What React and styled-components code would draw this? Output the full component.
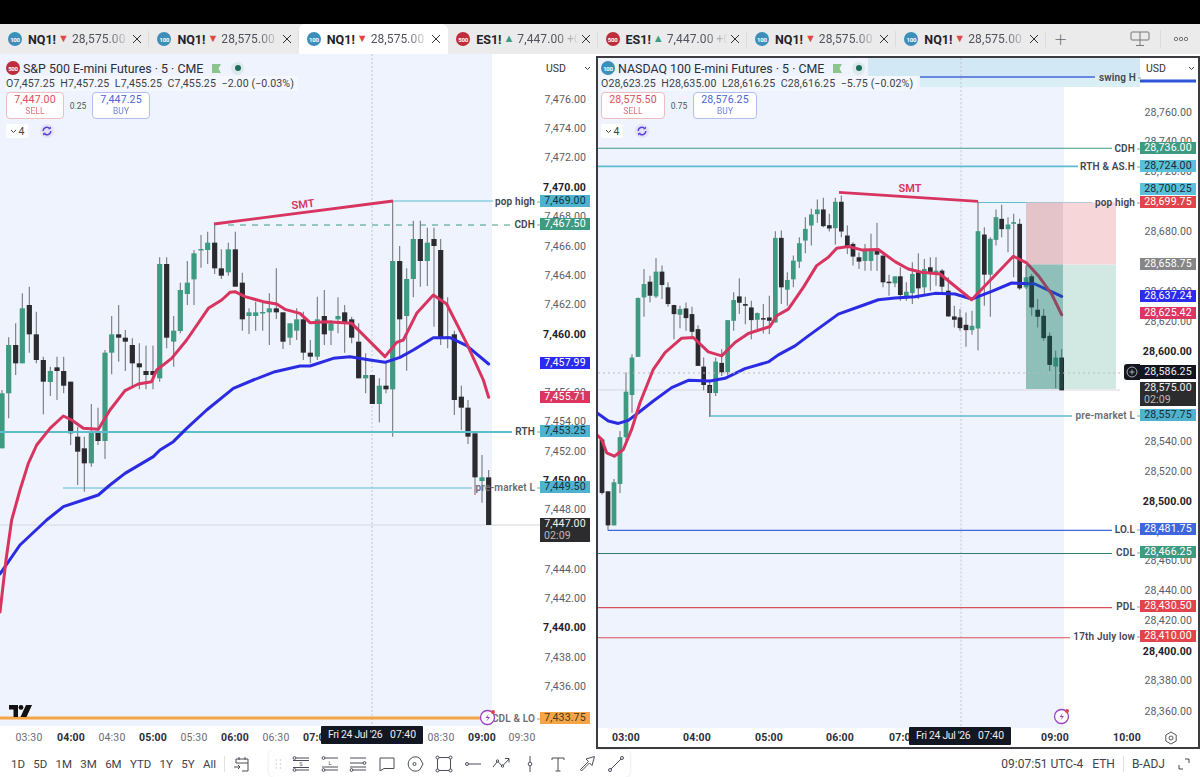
import React from "react";
import styled, { createGlobalStyle } from "styled-components";

const GlobalStyle = createGlobalStyle`
  html, body { margin: 0; padding: 0; background: #fff; }
  body { font-family: Roboto, "Liberation Sans", sans-serif; color: #2a2e39; }
`;

const GREEN = "#3f9a82";
const BLACK = "#2b2b2f";
const PINK = "#d7355f";
const BLUE = "#2b2be3";
const CYAN = "#5cbdd0";

const g = "g";
const k = "k";

// rows: center x, wick top, body top, body bottom, wick bottom, colour (zoomed coords)
const toPage = (ox, oy, rows) =>
  rows.map(([x, wt, bt, bb, wb, c]) => ({
    x: ox + x / 3,
    wt: oy + wt / 3,
    bt: oy + bt / 3,
    bb: oy + bb / 3,
    wb: oy + wb / 3,
    c,
  }));

const toPoints = (ox, oy, pts) =>
  pts.map(([x, y]) => `${ox + x / 3},${oy + y / 3}`).join(" ");

const leftCandles = [
  ...toPage(0, 180, [
    [6, 630, 640, 805, 805, g], [26, 472, 495, 640, 715, g], [47, 430, 495, 550, 585, k],
    [67, 340, 385, 550, 550, g], [88, 320, 375, 463, 518, k], [109, 395, 463, 540, 550, k],
    [130, 530, 540, 605, 703, k], [151, 560, 573, 606, 648, g], [171, 530, 562, 573, 660, k],
    [191, 530, 573, 617, 640, k], [212, 605, 605, 760, 795, k], [233, 740, 770, 815, 915, k],
    [253, 770, 805, 850, 935, k], [274, 672, 755, 850, 860, g], [294, 683, 755, 783, 795, k],
    [315, 510, 518, 783, 837, g], [335, 408, 463, 518, 583, g], [356, 375, 463, 473, 545, k],
    [376, 450, 473, 485, 573, k], [397, 475, 495, 550, 620, k], [418, 490, 550, 562, 628, k],
    [438, 497, 573, 585, 628, k], [459, 497, 573, 585, 628, k], [479, 232, 252, 595, 605, g],
    [500, 232, 252, 473, 505, k], [521, 408, 452, 485, 560, g], [541, 308, 330, 453, 460, g],
    [562, 243, 308, 342, 375, g], [582, 210, 220, 298, 375, g], [603, 165, 207, 208, 263, g],
    [623, 155, 188, 210, 252, g], [644, 133, 188, 265, 282, k], [664, 208, 265, 287, 297, k],
    [685, 188, 208, 277, 287, g], [706, 155, 208, 320, 320, k], [727, 278, 308, 418, 452, k],
    [747, 385, 397, 408, 462, g], [767, 365, 397, 408, 452, g], [788, 365, 396, 398, 452, g],
    [808, 340, 385, 397, 495, g], [829, 265, 385, 397, 417, k], [849, 397, 397, 485, 507, k],
    [870, 430, 430, 473, 495, g], [890, 385, 418, 452, 480, g],
  ]),
  ...toPage(300, 180, [
    [10, 395, 418, 518, 540, k], [31, 480, 518, 530, 550, k], [52, 350, 418, 530, 540, g],
    [73, 330, 408, 463, 495, k], [93, 420, 430, 452, 495, g], [114, 352, 408, 418, 460, g],
    [134, 375, 397, 430, 518, k], [155, 410, 418, 473, 490, k], [176, 430, 485, 595, 595, k],
    [197, 520, 585, 595, 640, g], [217, 590, 585, 672, 672, k], [238, 595, 617, 672, 727, g],
    [258, 545, 617, 628, 640, k], [278, 65, 243, 628, 770, g], [299, 198, 243, 418, 530, k],
    [320, 265, 297, 408, 572, g], [340, 122, 177, 297, 352, g], [361, 122, 177, 243, 320, k],
    [382, 143, 188, 243, 318, g], [402, 143, 177, 198, 440, k], [422, 177, 210, 473, 495, k],
    [443, 352, 470, 475, 505, k], [463, 452, 463, 660, 705, k], [484, 617, 650, 683, 750, k],
    [504, 660, 683, 770, 792, k], [525, 760, 760, 892, 945, k], [546, 825, 892, 903, 968, g],
    [566, 870, 892, 1035, 1035, k],
  ]),
];

const rightCandles = [
  ...toPage(595, 180, [
    [21, 770, 775, 935, 940, k], [39, 930, 930, 1032, 1048, k], [57, 893, 903, 1032, 1032, g],
    [75, 750, 768, 908, 935, g], [93, 575, 632, 768, 790, g], [111, 520, 530, 642, 695, g],
    [129, 350, 352, 528, 528, g], [147, 265, 310, 350, 408, g], [165, 285, 303, 345, 365, k],
    [183, 232, 273, 347, 352, g], [201, 255, 273, 313, 355, k], [219, 305, 320, 370, 378, k],
    [237, 372, 373, 400, 475, k], [255, 375, 385, 402, 442, g], [273, 365, 383, 412, 450, k],
    [291, 378, 400, 453, 470, k], [309, 433, 445, 555, 555, k], [326, 530, 557, 612, 628, k],
    [344, 600, 612, 636, 708, k], [362, 530, 542, 636, 645, g], [380, 505, 546, 574, 585, k],
    [398, 418, 418, 574, 583, g], [416, 335, 358, 420, 450, g], [433, 293, 347, 366, 400, k],
    [451, 348, 370, 375, 430, k], [469, 360, 380, 418, 475, k], [487, 395, 397, 417, 450, g],
    [505, 370, 412, 416, 458, k], [523, 345, 410, 420, 460, k], [541, 152, 172, 425, 425, g],
    [559, 150, 172, 320, 370, k], [577, 275, 298, 327, 375, g], [595, 225, 240, 296, 320, g],
    [613, 170, 188, 243, 262, g], [631, 110, 145, 180, 218, g], [649, 85, 102, 135, 195, g],
    [667, 57, 87, 101, 127, g], [685, 52, 87, 137, 140, k], [703, 100, 134, 144, 153, k],
    [721, 52, 64, 143, 192, g], [739, 45, 64, 153, 170, k], [757, 135, 165, 197, 220, k],
    [774, 185, 190, 228, 255, k], [792, 215, 230, 243, 265, k], [810, 190, 207, 241, 270, g],
    [828, 160, 207, 241, 270, g], [846, 127, 207, 222, 270, k], [864, 225, 225, 305, 320, k],
    [882, 282, 303, 306, 345, k],
  ]),
  ...toPage(895, 130, [
    [0, 437, 437, 458, 470, g], [16, 410, 437, 493, 510, k], [34, 455, 483, 497, 510, g],
    [52, 395, 430, 487, 520, g], [70, 368, 425, 473, 505, k], [88, 385, 415, 470, 492, g],
    [106, 380, 410, 427, 480, k], [123, 380, 420, 427, 465, g], [141, 415, 420, 468, 490, k],
    [160, 440, 480, 557, 557, k], [178, 525, 557, 567, 590, k], [195, 535, 560, 592, 600, k],
    [213, 545, 582, 598, 648, k], [231, 540, 585, 598, 612, g], [249, 213, 302, 593, 658, g],
    [268, 290, 312, 432, 525, k], [286, 320, 325, 432, 558, g], [303, 237, 260, 328, 345, g],
    [320, 223, 265, 296, 320, k], [339, 260, 282, 296, 365, g], [356, 250, 275, 280, 440, g],
    [374, 265, 280, 473, 478, k], [393, 405, 440, 470, 475, g], [410, 430, 437, 530, 555, k],
    [428, 505, 537, 558, 590, k], [446, 535, 555, 622, 630, k], [464, 605, 615, 702, 720, k],
    [482, 660, 680, 707, 772, g], [500, 655, 680, 778, 778, k],
  ]),
];

const leftRed = [
  "0,612 6,560 " +
    toPoints(0, 180, [[35, 1020], [60, 930], [85, 850], [110, 795], [150, 745], [190, 708], [215, 720], [250, 745], [295, 748], [330, 690], [375, 632], [415, 612], [455, 605], [470, 570], [515, 535], [560, 480], [625, 385], [665, 360], [690, 337], [705, 335], [735, 350], [790, 365], [830, 372], [855, 388], [900, 400]]),
  toPoints(300, 180, [[30, 428], [80, 425], [130, 428], [155, 430], [180, 455], [255, 530], [290, 487], [310, 480], [350, 400], [400, 345], [440, 372], [500, 490], [550, 600], [566, 652]]),
].join(" ");

const leftBlue = [
  "0,574 20,545 " +
    toPoints(0, 180, [[140, 1020], [190, 980], [250, 960], [295, 945], [330, 915], [375, 880], [460, 830], [480, 810], [520, 785], [560, 745], [620, 690], [700, 625], [760, 600], [825, 575], [900, 558]]),
  toPoints(300, 180, [[30, 558], [100, 535], [150, 530], [210, 540], [255, 547], [300, 532], [340, 510], [400, 473], [450, 473], [500, 497], [566, 552]]),
].join(" ");

const rightRed = [
  toPoints(595, 180, [[5, 760], [20, 775], [35, 815], [58, 825], [85, 805], [110, 745], [135, 665], [175, 565], [210, 515], [260, 472], [295, 470], [340, 513], [380, 525], [420, 485], [460, 458], [525, 437], [545, 405], [580, 385], [625, 320], [665, 255], [700, 230], [725, 203], [760, 198], [800, 208], [850, 207], [900, 243]]),
  toPoints(895, 130, [[40, 415], [80, 425], [135, 430], [230, 507], [270, 465], [355, 377], [395, 397], [430, 435], [470, 490], [500, 552]]),
].join(" ");

const rightBlue = [
  toPoints(595, 180, [[5, 695], [40, 720], [70, 727], [100, 718], [130, 695], [175, 660], [230, 620], [280, 598], [345, 600], [390, 592], [450, 563], [520, 543], [550, 522], [600, 495], [640, 465], [730, 400], [800, 375], [850, 357], [900, 352]]),
  toPoints(895, 130, [[60, 498], [120, 488], [180, 490], [230, 505], [290, 482], [350, 457], [420, 460], [500, 497]]),
].join(" ");

const leftPrices = [
  [7476, 99], [7474, 128], [7472, 157], [7470, 187, true], [7468, 216], [7466, 246], [7464, 275],
  [7462, 304], [7460, 334, true], [7456, 392], [7454, 421], [7452, 451], [7450, 480, true], [7448, 509],
  [7444, 569], [7442, 598], [7440, 627, true], [7438, 657], [7436, 686],
].map(([p, y, bold]) => ({ text: `${p.toString().replace(/^(\d)/, "$1,")}.00`, y, bold }));

const rightPrices = [
  ["28,760.00", 112], ["28,740.00", 141], ["28,720.00", 171], ["28,680.00", 231], ["28,640.00", 291],
  ["28,620.00", 321], ["28,600.00", 351, true], ["28,540.00", 441], ["28,520.00", 471],
  ["28,500.00", 501, true], ["28,480.00", 531], ["28,460.00", 560], ["28,440.00", 590], ["28,420.00", 620],
  ["28,400.00", 651, true], ["28,380.00", 680], ["28,360.00", 711],
].map(([text, y, bold]) => ({ text, y, bold }));

const leftTags = [
  { y: 201, text: "7,469.00", bg: "#4fb3cf", fg: "#16323c", label: "pop high" },
  { y: 224, text: "7,467.50", bg: "#3f9a82", label: "CDH" },
  { y: 363, text: "7,457.99", bg: "#2b2bef" },
  { y: 397, text: "7,455.71", bg: "#dc3561" },
  { y: 431, text: "7,453.25", bg: "#4fb3cf", fg: "#16323c", label: "RTH" },
  { y: 487, text: "7,449.50", bg: "#4fb3cf", fg: "#16323c", label: "pre-market L", soft: true },
  { y: 718, text: "7,433.75", bg: "#f5a545", fg: "#4a3a20", label: "CDL & LO", soft: true },
];

const rightTags = [
  { y: 148, text: "28,736.00", bg: "#3f9a82", label: "CDH" },
  { y: 166, text: "28,724.00", bg: "#5cc0da", fg: "#1c2a33", label: "RTH & AS.H" },
  { y: 189, text: "28,700.25", bg: "#5cc0da", fg: "#1c2a33" },
  { y: 202, text: "28,699.75", bg: "#e2444b", label: "pop high" },
  { y: 264, text: "28,658.75", bg: "#868686" },
  { y: 296, text: "28,637.24", bg: "#2b2bef" },
  { y: 313, text: "28,625.42", bg: "#dc3561" },
  { y: 415, text: "28,557.75", bg: "#4fb3cf", fg: "#1c2a33", label: "pre-market L", soft: true },
  { y: 529, text: "28,481.75", bg: "#3f66dd", label: "LO.L" },
  { y: 552, text: "28,466.25", bg: "#3f9a82", label: "CDL" },
  { y: 606, text: "28,430.50", bg: "#e2444b", label: "PDL" },
  { y: 636, text: "28,410.00", bg: "#e2444b", label: "17th July low" },
];

const tabs = [
  { kind: "100", sym: "NQ1!", price: "28,575.00", down: true },
  { kind: "100", sym: "NQ1!", price: "28,575.00", down: true },
  { kind: "100", sym: "NQ1!", price: "28,575.00", down: true, active: true },
  { kind: "500", sym: "ES1!", price: "7,447.00 +0", down: false },
  { kind: "500", sym: "ES1!", price: "7,447.00 +0", down: false },
  { kind: "100", sym: "NQ1!", price: "28,575.00", down: true },
  { kind: "100", sym: "NQ1!", price: "28,575.00", down: true },
];

const Page = styled.div`
  width: 1200px;
  height: 777px;
  overflow: hidden;
  display: flex;
  flex-direction: column;
  background: #fff;
`;

const TopStrip = styled.div`
  height: 24px;
  background: #000;
`;

const TabBar = styled.div`
  height: 30px;
  display: flex;
  align-items: stretch;
  background: #ebebeb;
`;

const Tab = styled.div`
  width: 149.4px;
  box-sizing: border-box;
  display: flex;
  align-items: center;
  padding: 0 6px 0 8px;
  background: ${(p) => (p.$active ? "#fff" : "transparent")};
  border-radius: 6px 6px 0 0;
  font-size: 12px;
  position: relative;
  &::after {
    content: "";
    position: absolute;
    right: 0;
    top: 7px;
    bottom: 7px;
    width: 1px;
    background: ${(p) => (p.$active ? "transparent" : "#dcdcdc")};
  }
`;

const Badge = styled.span`
  flex: none;
  width: 14px;
  height: 14px;
  border-radius: 50%;
  background: ${(p) => (p.$kind === "500" ? "#bf2d3a" : "#3c8fb9")};
  color: #fff;
  font-size: 6px;
  font-weight: 700;
  display: flex;
  align-items: center;
  justify-content: center;
  letter-spacing: -0.2px;
`;

const TabSymbol = styled.span`
  font-weight: 700;
  font-size: 12.5px;
  color: #1e222d;
  margin-left: 6px;
`;

const Arrow = styled.span`
  font-size: 11px;
  line-height: 12px;
  color: ${(p) => (p.$down ? "#e04848" : "#3f9a82")};
  margin: 0 3px 0 2px;
`;

const TabPrice = styled.span`
  flex: 1;
  min-width: 0;
  overflow: hidden;
  white-space: nowrap;
  color: #50535e;
  letter-spacing: 0.1px;
  -webkit-mask-image: linear-gradient(to right, #000 62%, transparent 100%);
  mask-image: linear-gradient(to right, #000 62%, transparent 100%);
`;

const CloseIcon = styled.svg`
  flex: none;
  width: 10px;
  height: 10px;
  margin: 0 1px 0 2px;
`;

const AddTab = styled.div`
  width: 30px;
  font-size: 21px;
  font-weight: 200;
  color: #666;
  display: flex;
  align-items: center;
  justify-content: center;
`;

const TabActions = styled.div`
  flex: 1;
  display: flex;
  align-items: center;
  justify-content: flex-end;
  gap: 10px;
  padding-right: 11px;
  color: #777;
`;

const ActionDivider = styled.span`
  width: 1px;
  height: 18px;
  background: #dcdcdc;
`;

const Panes = styled.div`
  height: 696px;
  display: flex;
  gap: 2px;
`;

const PaneBox = styled.div`
  position: relative;
  box-sizing: border-box;
  display: flex;
  flex-direction: column;
  width: ${(p) => (p.$framed ? "604px" : "594px")};
  height: ${(p) => (p.$framed ? "693px" : "696px")};
  margin-top: ${(p) => (p.$framed ? "2px" : "0")};
  border: ${(p) => (p.$framed ? "2px solid #3c3c40" : "none")};
`;

const PlotRow = styled.div`
  flex: 1;
  min-height: 0;
  display: flex;
  position: relative;
`;

const Plot = styled.div`
  flex: 1;
  min-width: 0;
  position: relative;
  overflow: hidden;
`;

const ChartSvg = styled.svg`
  position: absolute;
  left: 0;
  top: 0;
  width: 100%;
  height: 100%;
`;

const PriceAxis = styled.div`
  width: ${(p) => p.$width}px;
  flex: none;
  position: relative;
  font-size: 10.6px;
  color: #50535e;
  background: #fff;
`;

const CurrencyBox = styled.div`
  position: absolute;
  top: ${(p) => p.$top}px;
  left: 3px;
  right: 3px;
  height: 13px;
  display: flex;
  align-items: center;
  justify-content: space-between;
  font-size: 10.5px;
  color: #333;
  padding: 0 0 0 3px;
  background: #fff;
  z-index: 4;
`;

const Tick = styled.div`
  position: absolute;
  right: ${(p) => p.$right}px;
  transform: translateY(-50%);
  font-weight: ${(p) => (p.$bold ? 700 : 400)};
  color: ${(p) => (p.$bold ? "#1e222d" : "#5a5d68")};
  letter-spacing: 0.1px;
`;

const PriceTag = styled.div`
  position: absolute;
  left: 0;
  right: ${(p) => p.$right}px;
  height: 12px;
  transform: translateY(-50%);
  background: ${(p) => p.$bg};
  color: ${(p) => p.$fg || "#fff"};
  font-size: 10.6px;
  line-height: 12px;
  text-align: center;
  letter-spacing: 0.1px;
  z-index: 2;
`;

const TagLabel = styled.div`
  position: absolute;
  right: ${(p) => p.$right}px;
  transform: translateY(-50%);
  font-size: 10px;
  font-weight: 600;
  letter-spacing: 0.15px;
  white-space: nowrap;
  color: ${(p) => (p.$soft ? "#6a6c74" : "#42454e")};
  z-index: 2;
  &::after {
    content: "";
    position: absolute;
    right: -5px;
    top: 50%;
    width: 3px;
    height: 1px;
    background: #999;
  }
`;

const LastPrice = styled.div`
  position: absolute;
  left: 0;
  right: ${(p) => p.$right}px;
  height: 24px;
  background: #2c2c2e;
  color: #f0f0f0;
  font-size: 10.6px;
  line-height: 12px;
  padding: 0 4px;
  text-align: center;
  letter-spacing: 0.1px;
  z-index: 3;
  small {
    display: block;
    text-align: left;
    font-size: 10.6px;
    color: #b9b9b9;
  }
`;

const CrosshairTag = styled.div`
  position: absolute;
  left: 0;
  right: ${(p) => p.$right}px;
  height: 14px;
  transform: translateY(-50%);
  background: #14161f;
  color: #f0f0f0;
  font-size: 10.6px;
  line-height: 14px;
  text-align: center;
  letter-spacing: 0.1px;
  z-index: 3;
`;

const CrosshairPlus = styled.div`
  position: absolute;
  right: 58px;
  width: 16px;
  height: 16px;
  transform: translateY(-50%);
  background: #14161f;
  border-radius: 3px 0 0 3px;
  display: flex;
  align-items: center;
  justify-content: center;
  z-index: 3;
`;

const Legend = styled.div`
  position: absolute;
  left: ${(p) => p.$left}px;
  top: ${(p) => p.$top}px;
  display: flex;
  flex-direction: column;
  align-items: flex-start;
  z-index: 3;
`;

const TitleRow = styled.div`
  display: flex;
  align-items: center;
  height: 16px;
  font-size: 12.4px;
  color: #2a2e39;
  white-space: nowrap;
`;

const TitleText = styled.span`
  margin: 0 8px 0 3px;
`;

const StatusDot = styled.span`
  width: 13px;
  height: 13px;
  margin-left: 9px;
  border-radius: 50%;
  background: #dbeae8;
  display: flex;
  align-items: center;
  justify-content: center;
  &::after {
    content: "";
    width: 6px;
    height: 6px;
    border-radius: 50%;
    background: #1f6b5f;
  }
`;

const OhlcRow = styled.div`
  height: 15px;
  line-height: 15px;
  font-size: 10.6px;
  color: #3c3f49;
  letter-spacing: 0.1px;
  white-space: nowrap;
  background: rgba(255, 255, 255, 0.35);
  padding: 0 4px 0 0;
  display: flex;
  gap: 5.5px;
`;

const TradeRow = styled.div`
  margin-top: 1px;
  display: flex;
  align-items: center;
`;

const TradeButton = styled.div`
  width: ${(p) => p.$width}px;
  height: 27px;
  box-sizing: border-box;
  border-radius: 4px;
  border: 1px solid ${(p) => (p.$buy ? "#b5bdf0" : "#f0bcbc")};
  background: #fff;
  color: ${(p) => (p.$buy ? "#4a66d8" : "#d9505a")};
  text-align: center;
  font-size: 10.6px;
  line-height: 13px;
  letter-spacing: 0.1px;
  small {
    display: block;
    font-size: 8.5px;
    line-height: 11px;
    opacity: 0.8;
  }
`;

const Spread = styled.span`
  width: 28px;
  text-align: center;
  font-size: 8.5px;
  color: #555;
`;

const IndicatorRow = styled.div`
  margin-top: 5px;
  display: flex;
  align-items: center;
  gap: 8px;
`;

const CountBox = styled.div`
  width: 22px;
  height: 14px;
  background: #fff;
  border-radius: 2px;
  display: flex;
  align-items: center;
  justify-content: center;
  gap: 2px;
  font-size: 10.5px;
  color: #444;
`;

const SyncCircle = styled.span`
  width: 14px;
  height: 14px;
  margin-left: 4px;
  border-radius: 50%;
  background: #e4e2fa;
  display: flex;
  align-items: center;
  justify-content: center;
`;

const TimeAxis = styled.div`
  height: ${(p) => p.$height}px;
  flex: none;
  position: relative;
  background: #fff;
  font-size: 10.5px;
  color: #6a6d78;
`;

const TimeTick = styled.span`
  position: absolute;
  top: ${(p) => p.$top}px;
  transform: translateX(-50%);
  font-weight: ${(p) => (p.$bold ? 700 : 400)};
  color: ${(p) => (p.$bold ? "#2a2e39" : "#6a6d78")};
  letter-spacing: 0.2px;
`;

const TimeTooltip = styled.div`
  position: absolute;
  top: 0;
  height: 18px;
  width: 102px;
  box-sizing: border-box;
  background: #131722;
  color: #eee;
  font-size: 10.4px;
  line-height: 18px;
  white-space: nowrap;
  display: flex;
  justify-content: space-between;
  padding: 0 7px;
  border-radius: 1px;
  z-index: 3;
`;

const TooltipDate = styled.span`
  letter-spacing: -0.3px;
`;

const AxisGear = styled.svg`
  position: absolute;
  top: 3px;
  right: 20px;
  width: 14px;
  height: 14px;
`;

const LogoMark = styled.svg`
  position: absolute;
  left: 9px;
  top: 651px;
  width: 23px;
  height: 12px;
  z-index: 2;
`;

const AlertBadge = styled.svg`
  position: absolute;
  width: 18px;
  height: 18px;
  z-index: 4;
`;

const BottomBar = styled.div`
  flex: 1;
  display: flex;
  align-items: center;
  font-size: 11.5px;
  color: #444;
`;

const RangeGroup = styled.div`
  display: flex;
  align-items: center;
  width: 224px;
  box-sizing: border-box;
  padding: 0 8px 0 11px;
  justify-content: space-between;
`;

const RangeItem = styled.span`
  font-size: 11.5px;
  color: #3f424c;
`;

const BarDivider = styled.span`
  width: 1px;
  height: 16px;
  background: #e2e2e2;
  margin: ${(p) => p.$margin || "0 6px"};
`;

const ToolStrip = styled.div`
  height: 27px;
  width: 361px;
  box-sizing: border-box;
  margin-left: 18px;
  display: flex;
  align-items: center;
  padding-left: 6px;
  border-radius: 5px;
  box-shadow: 0 0 3px rgba(0, 0, 0, 0.14);
`;

const Grip = styled.svg`
  width: 8px;
  height: 12px;
  margin-right: 9px;
  flex: none;
`;

const ToolIcon = styled.svg`
  width: 18px;
  height: 18px;
  flex: none;
  margin-right: ${(p) => (p.$last ? 0 : 10.6)}px;
  fill: none;
  stroke: #4a4d57;
  stroke-width: 1;
`;

const StatusGroup = styled.div`
  margin-left: auto;
  display: flex;
  align-items: center;
  padding-right: 10px;
  font-size: 12px;
  color: #3f424c;
`;

const StatusText = styled.span`
  margin-right: ${(p) => p.$gap || 0}px;
`;

const Candles = ({ data, width }) =>
  data.map((c, i) => (
    <g key={i}>
      <line x1={c.x} x2={c.x} y1={c.wt} y2={c.wb} stroke="#77787c" strokeWidth="1.1" />
      <rect
        x={c.x - width / 2}
        y={c.bt}
        width={width}
        height={Math.max(c.bb - c.bt, 1.5)}
        fill={c.c === g ? GREEN : BLACK}
      />
    </g>
  ));

const MaLine = ({ points, color }) => (
  <polyline points={points} fill="none" stroke={color} strokeWidth="3" strokeLinejoin="round" strokeLinecap="round" />
);

const Bolt = ({ left, top }) => (
  <AlertBadge viewBox="0 0 18 18" style={{ left, top }}>
    <circle cx="8.5" cy="9.5" r="7" fill="#fff" stroke="#9a3fc0" strokeWidth="1.3" />
    <path d="M10 5.5 6.5 10h2.6L7.5 13.5 11 9H8.4z" fill="#9a3fc0" />
    <circle cx="14" cy="4" r="2" fill="#e2444b" />
  </AlertBadge>
);

const SyncIcon = () => (
  <svg width="10" height="10" viewBox="0 0 10 10" fill="none" stroke="#5a3fd8" strokeWidth="1.4">
    <path d="M1.2 5a3.8 3.8 0 0 1 6.6-2.5" />
    <path d="M8.8 5a3.8 3.8 0 0 1-6.6 2.5" />
    <path d="M8.4 .8v2H6.4M1.6 9.2v-2h2" strokeWidth="1" />
  </svg>
);

const Flag = () => (
  <svg width="11" height="11" viewBox="0 0 11 11">
    <path d="M1 1h9L7.5 5.5 10 10H1z" fill="#8cc48e" />
  </svg>
);

const Chevron = () => (
  <svg width="7" height="5" viewBox="0 0 7 5" fill="none" stroke="#444" strokeWidth="1">
    <path d="M1 1l2.5 2.5L6 1" />
  </svg>
);

const LegendBlock = ({ left, top, kind, title, ohlc, sell, spread, buy, sellWidth, buyWidth }) => (
  <Legend $left={left} $top={top}>
    <TitleRow>
      <Badge $kind={kind}>{kind}</Badge>
      <TitleText>{title}</TitleText>
      <Flag />
      <StatusDot />
    </TitleRow>
    <OhlcRow>
      {ohlc.map((v) => (
        <span key={v}>{v}</span>
      ))}
    </OhlcRow>
    <TradeRow>
      <TradeButton $width={sellWidth}>
        {sell}
        <small>SELL</small>
      </TradeButton>
      <Spread>{spread}</Spread>
      <TradeButton $width={buyWidth} $buy>
        {buy}
        <small>BUY</small>
      </TradeButton>
    </TradeRow>
    <IndicatorRow>
      <CountBox>
        <Chevron />4
      </CountBox>
      <SyncCircle>
        <SyncIcon />
      </SyncCircle>
    </IndicatorRow>
  </Legend>
);

const LeftChart = () => (
  <ChartSvg viewBox="0 54 540 672" preserveAspectRatio="none">
    <rect x="0" y="54" width="492" height="672" fill="#eef3fd" />
    <line x1="372" x2="372" y1="54" y2="726" stroke="#c2c6d0" strokeDasharray="2 2" />
    <line x1="0" x2="540" y1="525" y2="525" stroke="#d8d8dc" />
    <line x1="228" x2="510" y1="225" y2="225" stroke={GREEN} strokeDasharray="6 6" />
    <line x1="393" x2="493" y1="201" y2="201" stroke={CYAN} />
    <line x1="63" x2="472" y1="488" y2="488" stroke={CYAN} />
    <Candles data={leftCandles} width={5.2} />
    <line x1="0" x2="512" y1="432" y2="432" stroke={CYAN} strokeWidth="1.8" />
    <MaLine points={leftBlue} color={BLUE} />
    <MaLine points={leftRed} color={PINK} />
    <line x1="214" x2="393" y1="224" y2="201" stroke={PINK} strokeWidth="2.8" />
    <text x="303" y="208" fontSize="11" fontWeight="600" fill={PINK} textAnchor="middle" transform="rotate(-7 303 204)">
      SMT
    </text>
    <line x1="0" x2="490" y1="718" y2="718" stroke="#f5a545" strokeWidth="3" />
  </ChartSvg>
);

const RightChart = () => (
  <ChartSvg viewBox="598 58 542 668" preserveAspectRatio="none">
    <rect x="598" y="58" width="466" height="668" fill="#eef3fd" />
    <path d="M868 58h272v18h-272z" fill="#d3e8f5" />
    <path d="M920 76h220v11h-220z" fill="#d9eff5" />
    <line x1="961" x2="961" y1="58" y2="726" stroke="#c2c6d0" strokeDasharray="2 2" />
    <line x1="920" x2="1095" y1="77" y2="77" stroke="#3f66dd" strokeWidth="1.4" />
    <line x1="598" x2="1112" y1="148" y2="148" stroke={GREEN} strokeWidth="1.2" />
    <line x1="598" x2="1078" y1="166" y2="166" stroke={CYAN} strokeWidth="1.6" />
    <line x1="978" x2="1092" y1="202" y2="202" stroke={CYAN} />
    <rect x="1026" y="202" width="90" height="62" fill="#f6d6d9" />
    <rect x="1026" y="264" width="90" height="124" fill="#d2e9e3" />
    <line x1="598" x2="1120" y1="389" y2="389" stroke="#d8d8dc" />
    <Candles data={rightCandles} width={4.7} />
    <line x1="710" x2="710" y1="385" y2="415" stroke="#77787c" />
    <line x1="710" x2="1072" y1="415" y2="415" stroke={CYAN} strokeWidth="1.6" />
    <MaLine points={rightBlue} color={BLUE} />
    <MaLine points={rightRed} color={PINK} />
    <rect x="1026" y="202" width="37" height="62" fill="rgba(150,110,130,0.18)" />
    <rect x="1026" y="264" width="37" height="124" fill="rgba(15,110,105,0.34)" />
    <line x1="598" x2="1120" y1="372" y2="372" stroke="#b8bcc6" strokeDasharray="2 3" />
    <line x1="839" x2="978" y1="192" y2="201" stroke={PINK} strokeWidth="2.8" />
    <text x="910" y="192" fontSize="11" fontWeight="600" fill={PINK} textAnchor="middle">
      SMT
    </text>
    <line x1="608" x2="1112" y1="529" y2="529" stroke="#3f66dd" strokeWidth="1.2" />
    <line x1="598" x2="1112" y1="552" y2="552" stroke="#2f7f6c" strokeWidth="1.1" />
    <line x1="598" x2="1112" y1="606" y2="606" stroke="#d9505a" strokeWidth="1.1" />
    <line x1="598" x2="1070" y1="636" y2="636" stroke="#d9505a" strokeWidth="1.1" />
  </ChartSvg>
);

const App = () => (
  <Page>
    <GlobalStyle />
    <TopStrip />
    <TabBar>
      {tabs.map((t, i) => (
        <Tab key={i} $active={t.active}>
          <Badge $kind={t.kind}>{t.kind}</Badge>
          <TabSymbol>{t.sym}</TabSymbol>
          <Arrow $down={t.down}>{t.down ? "▼" : "▲"}</Arrow>
          <TabPrice>{t.price}</TabPrice>
          <CloseIcon viewBox="0 0 10 10" fill="none" stroke="#333" strokeWidth="1">
            <path d="M1 1l8 8M9 1l-8 8" />
          </CloseIcon>
        </Tab>
      ))}
      <AddTab>+</AddTab>
      <TabActions>
        <svg width="20" height="16" viewBox="0 0 20 16" fill="none" stroke="#777" strokeWidth="1">
          <rect x="1" y="1" width="18" height="8" rx="1" />
          <path d="M10 1v13M6 14.5h8" />
        </svg>
        <ActionDivider />
        <svg width="16" height="6" viewBox="0 0 16 6" fill="none" stroke="#777" strokeWidth="1" style={{ marginLeft: 2 }}>
          <circle cx="3" cy="3" r="1.7" />
          <circle cx="8" cy="3" r="1.7" />
          <circle cx="13" cy="3" r="1.7" />
        </svg>
      </TabActions>
    </TabBar>

    <Panes>
      <PaneBox>
        <PlotRow>
          <Plot>
            <LeftChart />
          </Plot>
          <LegendBlock
            left={6}
            top={6}
            kind="500"
            title="S&P 500 E-mini Futures · 5 · CME"
            ohlc={["O7,457.25", "H7,457.25", "L7,455.25", "C7,455.25", "−2.00 (−0.03%)"]}
            sell="7,447.00"
            spread="0.25"
            buy="7,447.25"
            sellWidth={58}
            buyWidth={58}
          />
          <LogoMark viewBox="0 0 23 12">
            <path d="M0 0h9v12H4.5V4.5H0z" fill="#111" />
            <circle cx="12" cy="2.4" r="2.4" fill="#111" />
            <path d="M17 0h6l-5.5 12H11.5z" fill="#111" />
          </LogoMark>
          <Bolt left={479} top={654} />
          <PriceAxis $width={54}>
            <CurrencyBox $top={8}>
              USD
              <Chevron />
            </CurrencyBox>
            {leftPrices.map((t) => (
              <Tick key={t.text} $right={8} $bold={t.bold} style={{ top: t.y - 54 }}>
                {t.text}
              </Tick>
            ))}
            {leftTags.map((t) => (
              <PriceTag key={t.text} $bg={t.bg} $fg={t.fg} $right={4} style={{ top: t.y - 54 }}>
                {t.text}
              </PriceTag>
            ))}
            <LastPrice $right={4} style={{ top: 464 }}>
              7,447.00
              <small>02:09</small>
            </LastPrice>
          </PriceAxis>
          {leftTags
            .filter((t) => t.label)
            .map((t) => (
              <TagLabel key={t.text} $soft={t.soft} $right={59} style={{ top: t.y - 54 }}>
                {t.label}
              </TagLabel>
            ))}
        </PlotRow>
        <TimeAxis $height={24}>
          {[
            [29, "03:30"], [71, "04:00", 1], [112, "04:30"], [153, "05:00", 1], [194, "05:30"], [235, "06:00", 1],
            [276, "06:30"], [317, "07:00", 1], [441, "08:30"], [482, "09:00", 1], [522, "09:30"],
          ].map(([x, text, bold]) => (
            <TimeTick key={text} $top={5} $bold={bold} style={{ left: x }}>
              {text}
            </TimeTick>
          ))}
          <TimeTooltip style={{ left: 321 }}>
            <TooltipDate>Fri 24 Jul '26</TooltipDate>
            <span>07:40</span>
          </TimeTooltip>
        </TimeAxis>
      </PaneBox>

      <PaneBox $framed>
        <PlotRow>
          <Plot>
            <RightChart />
          </Plot>
          <LegendBlock
            left={3}
            top={2}
            kind="100"
            title="NASDAQ 100 E-mini Futures · 5 · CME"
            ohlc={["O28,623.25", "H28,635.00", "L28,616.25", "C28,616.25", "−5.75 (−0.02%)"]}
            sell="28,575.50"
            spread="0.75"
            buy="28,576.25"
            sellWidth={64}
            buyWidth={64}
          />
          <Bolt left={455} top={649} />
          <PriceAxis $width={58}>
            <CurrencyBox $top={4}>
              USD
              <Chevron />
            </CurrencyBox>
            {rightPrices.map((t) => (
              <Tick key={t.text} $right={6} $bold={t.bold} style={{ top: t.y - 58 }}>
                {t.text}
              </Tick>
            ))}
            {rightTags.map((t) => (
              <PriceTag key={t.text} $bg={t.bg} $fg={t.fg} $right={2} style={{ top: t.y - 58 }}>
                {t.text}
              </PriceTag>
            ))}
            <PriceTag $bg="#2f55d8" $right={2} style={{ top: 81 - 58, height: 3 }} />
            <CrosshairTag $right={2} style={{ top: 372 - 58 }}>
              28,586.25
            </CrosshairTag>
            <LastPrice $right={2} style={{ top: 382 - 58 }}>
              28,575.00
              <small>02:09</small>
            </LastPrice>
          </PriceAxis>
          <CrosshairPlus style={{ top: 372 - 58 }}>
            <svg width="12" height="12" viewBox="0 0 12 12" fill="none" stroke="#ccc" strokeWidth="0.8">
              <circle cx="6" cy="6" r="5" />
              <path d="M6 3.5v5M3.5 6h5" />
            </svg>
          </CrosshairPlus>
          <TagLabel $right={62} style={{ top: 77 - 58 }}>swing H</TagLabel>
          {rightTags
            .filter((t) => t.label)
            .map((t) => (
              <TagLabel key={t.text} $soft={t.soft} $right={63} style={{ top: t.y - 58 }}>
                {t.label}
              </TagLabel>
            ))}
        </PlotRow>
        <TimeAxis $height={19}>
          {[
            [28, "03:00"], [99, "04:00"], [171, "05:00"], [242, "06:00"], [305, "07:00"], [457, "09:00"], [529, "10:00"],
          ].map(([x, text]) => (
            <TimeTick key={text} $top={3} $bold style={{ left: x }}>
              {text}
            </TimeTick>
          ))}
          <TimeTooltip style={{ left: 311, top: -1 }}>
            <TooltipDate>Fri 24 Jul '26</TooltipDate>
            <span>07:40</span>
          </TimeTooltip>
          <AxisGear viewBox="0 0 14 14" fill="none" stroke="#555" strokeWidth="1">
            <path d="M7 1l5.2 3v6L7 13l-5.2-3V4z" />
            <circle cx="7" cy="7" r="2" />
          </AxisGear>
        </TimeAxis>
      </PaneBox>
    </Panes>

    <BottomBar>
      <RangeGroup>
        {["1D", "5D", "1M", "3M", "6M", "YTD", "1Y", "5Y", "All"].map((r) => (
          <RangeItem key={r}>{r}</RangeItem>
        ))}
      </RangeGroup>
      <BarDivider $margin="0 8px 0 0" />
      <ToolIcon viewBox="0 0 18 18" $last>
        <path d="M3 8V4h12v12H9M3 8h12M6 2v3M12 2v3M1 12h6M5 10l2 2-2 2" />
      </ToolIcon>
      <ToolStrip>
        <Grip viewBox="0 0 8 12" fill="#ccc">
          <circle cx="1.5" cy="2" r=".8" /><circle cx="5.5" cy="2" r=".8" />
          <circle cx="1.5" cy="6" r=".8" /><circle cx="5.5" cy="6" r=".8" />
          <circle cx="1.5" cy="10" r=".8" /><circle cx="5.5" cy="10" r=".8" />
        </Grip>
        <ToolIcon viewBox="0 0 18 18">
          <circle cx="2.5" cy="3" r="1.4" /><path d="M4 3h13M1 5.5h16M1 12.5h16M4 15h13" /><circle cx="2.5" cy="15" r="1.4" />
          <text x="9" y="11" fontSize="5.5" stroke="none" fill="#4a4d57" textAnchor="middle">S</text>
        </ToolIcon>
        <ToolIcon viewBox="0 0 18 18">
          <circle cx="2.5" cy="3" r="1.4" /><path d="M4 3h13M1 12h16M4 15h13" /><circle cx="2.5" cy="15" r="1.4" />
          <text x="9" y="9.5" fontSize="5.5" stroke="none" fill="#4a4d57" textAnchor="middle">L</text>
        </ToolIcon>
        <ToolIcon viewBox="0 0 18 18">
          <path d="M1 3h16M1 8h13M1 12h16M4 15h13" /><circle cx="15.5" cy="8" r="1.4" /><circle cx="2.5" cy="15" r="1.4" />
        </ToolIcon>
        <ToolIcon viewBox="0 0 18 18">
          <path d="M2 3h14v10.5H6L2 16z" />
        </ToolIcon>
        <ToolIcon viewBox="0 0 18 18">
          <path d="M14 3.5 17 9l-3 5.5A7.2 7.2 0 1 1 14 3.5z" /><circle cx="8.5" cy="9" r="1.5" />
        </ToolIcon>
        <ToolIcon viewBox="0 0 18 18">
          <rect x="2.5" y="2.5" width="13" height="13" />
          <circle cx="2.5" cy="2.5" r="1.5" fill="#fff" /><circle cx="15.5" cy="2.5" r="1.5" fill="#fff" />
          <circle cx="2.5" cy="15.5" r="1.5" fill="#fff" /><circle cx="15.5" cy="15.5" r="1.5" fill="#fff" />
        </ToolIcon>
        <ToolIcon viewBox="0 0 18 18">
          <circle cx="3" cy="9" r="1.5" /><path d="M4.5 9H17" />
        </ToolIcon>
        <ToolIcon viewBox="0 0 18 18">
          <path d="M1 12l4.2-5.2M6.2 6.8l3.6 3.8M11 10.5 17 4M13 3.5h4v4" />
          <circle cx="5.5" cy="6" r="1.2" /><circle cx="10.5" cy="11" r="1.2" />
        </ToolIcon>
        <ToolIcon viewBox="0 0 18 18">
          <path d="M9 1v6M9 11v6" /><circle cx="9" cy="9" r="1.8" />
        </ToolIcon>
        <ToolIcon viewBox="0 0 18 18">
          <path d="M3 5V3h12v2M9 3v13M6.5 16h5" />
        </ToolIcon>
        <ToolIcon viewBox="0 0 18 18">
          <path d="M16.5 1.5 8 4l2.5 2.5-8 8L3.5 16l8-8 2.5 2.5z" />
        </ToolIcon>
        <ToolIcon viewBox="0 0 18 18" $last>
          <circle cx="3" cy="15" r="1.5" /><circle cx="15" cy="3" r="1.5" /><path d="M4 14 14 4" />
        </ToolIcon>
      </ToolStrip>
      <StatusGroup>
        <StatusText $gap={9}>09:07:51 UTC-4</StatusText>
        <StatusText>ETH</StatusText>
        <BarDivider $margin="0 8px" />
        <StatusText $gap={13}>B-ADJ</StatusText>
        <svg width="12" height="12" viewBox="0 0 12 12" fill="none" stroke="#444" strokeWidth="1">
          <path d="M7 1h4v4M1 7v4h4" />
        </svg>
      </StatusGroup>
    </BottomBar>
  </Page>
);

export default App;
